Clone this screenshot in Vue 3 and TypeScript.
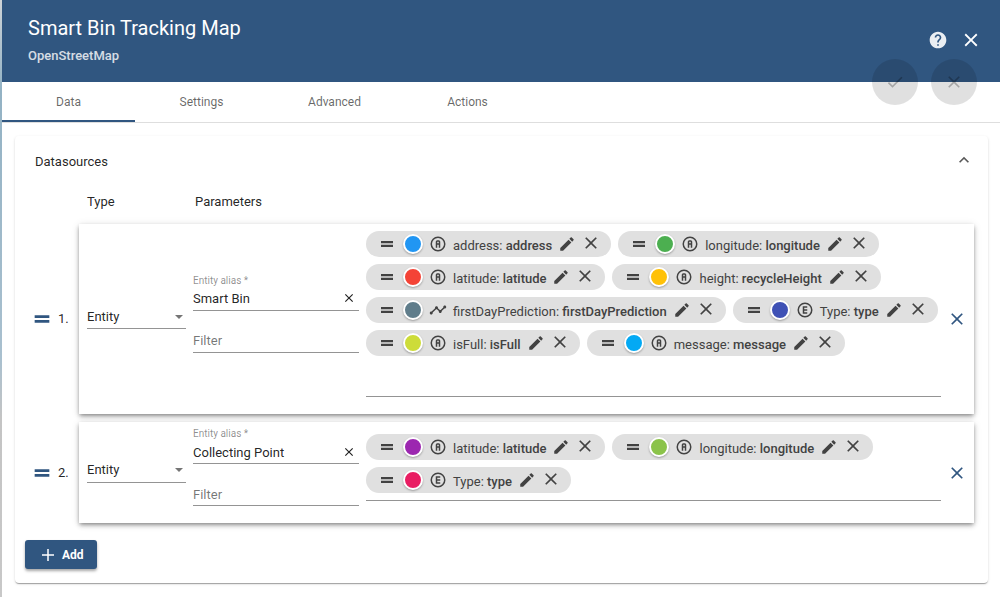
<script setup lang="ts">
import { ref } from 'vue'

type KeyKind = 'attribute' | 'entity' | 'timeseries'

interface DataKey {
  name: string
  label: string
  kind: KeyKind
  color: string
}

interface Datasource {
  type: string
  alias: string
  filter: string
  keys: DataKey[]
}

const tabs = ['Data', 'Settings', 'Advanced', 'Actions']
const activeTab = ref('Data')

const datasources = ref<Datasource[]>([
  {
    type: 'Entity',
    alias: 'Smart Bin',
    filter: '',
    keys: [
      { name: 'address', label: 'address', kind: 'attribute', color: '#2196f3' },
      { name: 'longitude', label: 'longitude', kind: 'attribute', color: '#4caf50' },
      { name: 'latitude', label: 'latitude', kind: 'attribute', color: '#f44336' },
      { name: 'height', label: 'recycleHeight', kind: 'attribute', color: '#ffc107' },
      { name: 'firstDayPrediction', label: 'firstDayPrediction', kind: 'timeseries', color: '#607d8b' },
      { name: 'Type', label: 'type', kind: 'entity', color: '#3f51b5' },
      { name: 'isFull', label: 'isFull', kind: 'attribute', color: '#cddc39' },
      { name: 'message', label: 'message', kind: 'attribute', color: '#03a9f4' },
    ],
  },
  {
    type: 'Entity',
    alias: 'Collecting Point',
    filter: '',
    keys: [
      { name: 'latitude', label: 'latitude', kind: 'attribute', color: '#9c27b0' },
      { name: 'longitude', label: 'longitude', kind: 'attribute', color: '#8bc34a' },
      { name: 'Type', label: 'type', kind: 'entity', color: '#e91e63' },
    ],
  },
])

const ring =
  'M12 20A8 8 0 0 0 20 12A8 8 0 0 0 12 4A8 8 0 0 0 4 12A8 8 0 0 0 12 20M12 2A10 10 0 0 1 22 12A10 10 0 0 1 12 22A10 10 0 0 1 2 12A10 10 0 0 1 12 2Z'

const kindIcon: Record<KeyKind, string> = {
  attribute: 'M11 7H13A2 2 0 0 1 15 9V17H13V13H11V17H9V9A2 2 0 0 1 11 7M11 9V11H13V9H11' + ring,
  entity: 'M9 7H15V9H11V11H15V13H11V15H15V17H9V7' + ring,
  timeseries:
    'M23 8c0 1.1-.9 2-2 2-.18 0-.35-.02-.51-.07l-3.56 3.55c.05.16.07.34.07.52 0 1.1-.9 2-2 2s-2-.9-2-2c0-.18.02-.36.07-.52l-2.55-2.55c-.16.05-.34.07-.52.07s-.36-.02-.52-.07l-4.55 4.56c.05.16.07.33.07.51 0 1.1-.9 2-2 2s-2-.9-2-2 .9-2 2-2c.18 0 .35.02.51.07l4.56-4.55C8.02 9.36 8 9.18 8 9c0-1.1.9-2 2-2s2 .9 2 2c0 .18-.02.36-.07.52l2.55 2.55c.16-.05.34-.07.52-.07s.36.02.52.07l3.55-3.56C19.02 8.35 19 8.18 19 8c0-1.1.9-2 2-2s2 .9 2 2z',
}

const closeIcon =
  'M19 6.41L17.59 5 12 10.59 6.41 5 5 6.41 10.59 12 5 17.59 6.41 19 12 13.41 17.59 19 19 17.59 13.41 12z'
const dragIcon = 'M20 8H4v3h16V8zM4 16h16v-3H4v3z'
const editIcon =
  'M3 17.25V21h3.75L17.81 9.94l-3.75-3.75L3 17.25zM20.71 7.04c.39-.39.39-1.02 0-1.41l-2.34-2.34c-.39-.39-1.02-.39-1.41 0l-1.83 1.83 3.75 3.75 1.83-1.83z'
const helpIcon =
  'M12 2C6.48 2 2 6.48 2 12s4.48 10 10 10 10-4.48 10-10S17.52 2 12 2zm1 17h-2v-2h2v2zm2.07-7.75l-.9.92C13.45 12.9 13 13.5 13 15h-2v-.5c0-1.1.45-2.1 1.17-2.83l1.24-1.26c.37-.36.59-.86.59-1.41 0-1.1-.9-2-2-2s-2 .9-2 2H8c0-2.21 1.79-4 4-4s4 1.79 4 4c0 .88-.36 1.68-.93 2.25z'

function removeKey(source: Datasource, index: number) {
  source.keys.splice(index, 1)
}

function removeSource(index: number) {
  datasources.value.splice(index, 1)
}

function addSource() {
  datasources.value.push({ type: 'Entity', alias: '', filter: '', keys: [] })
}
</script>

<template>
  <div class="page">
    <header class="toolbar">
      <div class="titles">
        <h1>Smart Bin Tracking Map</h1>
        <p>OpenStreetMap</p>
      </div>
      <div class="tools">
        <button type="button" class="icon-btn help" aria-label="Help">
          <svg width="20" height="20" viewBox="0 0 24 24"><path :d="helpIcon" /></svg>
        </button>
        <button type="button" class="icon-btn" aria-label="Close">
          <svg width="22" height="22" viewBox="0 0 24 24"><path :d="closeIcon" /></svg>
        </button>
      </div>
      <div class="fabs">
        <button type="button" class="fab" disabled aria-label="Apply changes">
          <svg width="20" height="20" viewBox="0 0 24 24">
            <path d="M9 16.17L4.83 12l-1.42 1.41L9 19 21 7l-1.41-1.41z" />
          </svg>
        </button>
        <button type="button" class="fab" disabled aria-label="Decline changes">
          <svg width="20" height="20" viewBox="0 0 24 24"><path :d="closeIcon" /></svg>
        </button>
      </div>
    </header>

    <nav class="tabs" role="tablist">
      <button
        v-for="tab in tabs"
        :key="tab"
        type="button"
        role="tab"
        class="tab"
        :class="{ active: tab === activeTab }"
        :aria-selected="tab === activeTab"
        @click="activeTab = tab"
      >
        {{ tab }}
      </button>
    </nav>

    <section class="panel">
      <div class="panel-head">
        <h2>Datasources</h2>
        <button type="button" class="icon-btn chevron" aria-label="Collapse datasources">
          <svg width="20" height="20" viewBox="0 0 24 24">
            <path d="M12 8l-6 6 1.41 1.41L12 10.83l4.59 4.58L18 14z" />
          </svg>
        </button>
      </div>

      <div class="columns">
        <span class="col-type">Type</span>
        <span>Parameters</span>
      </div>

      <ol class="sources">
        <li v-for="(source, index) in datasources" :key="index" class="source">
          <button type="button" class="icon-btn mover" aria-label="Reorder datasource">
            <svg width="22" height="22" viewBox="0 0 24 24"><path :d="dragIcon" /></svg>
          </button>
          <span class="number">{{ index + 1 }}.</span>
          <div class="card">
            <div class="type">
              <select v-model="source.type" aria-label="Type">
                <option>Entity</option>
                <option>Function</option>
              </select>
              <svg class="caret" width="8" height="4" viewBox="0 0 8 4"><path d="M0 0h8L4 4z" /></svg>
            </div>

            <div class="params">
              <label class="caption" :for="`alias-${index}`">Entity alias *</label>
              <div class="line">
                <input :id="`alias-${index}`" v-model="source.alias" type="text" />
                <button type="button" class="icon-btn clear" aria-label="Clear" @click="source.alias = ''">
                  <svg width="14" height="14" viewBox="0 0 24 24"><path :d="closeIcon" /></svg>
                </button>
              </div>
              <div class="line filter">
                <input v-model="source.filter" type="text" placeholder="Filter" aria-label="Filter" />
              </div>
            </div>

            <ul class="keys">
              <li v-for="(key, k) in source.keys" :key="key.name" class="chip">
                <svg width="18" height="18" viewBox="0 0 24 24"><path :d="dragIcon" /></svg>
                <button
                  type="button"
                  class="swatch"
                  :style="{ backgroundColor: key.color }"
                  :aria-label="`Color of ${key.label}`"
                ></button>
                <svg class="kind" width="18" height="18" viewBox="0 0 24 24">
                  <path :d="kindIcon[key.kind]" fill-rule="evenodd" />
                </svg>
                <span class="key-text">{{ key.name }}: <strong>{{ key.label }}</strong></span>
                <button type="button" class="icon-btn edit" :aria-label="`Edit ${key.label}`">
                  <svg width="18" height="18" viewBox="0 0 24 24"><path :d="editIcon" /></svg>
                </button>
                <button
                  type="button"
                  class="icon-btn remove"
                  :aria-label="`Remove ${key.label}`"
                  @click="removeKey(source, k)"
                >
                  <svg width="20" height="20" viewBox="0 0 24 24"><path :d="closeIcon" /></svg>
                </button>
              </li>
              <li class="entry"><input type="text" aria-label="Add data key" /></li>
            </ul>

            <button
              type="button"
              class="icon-btn drop"
              aria-label="Remove datasource"
              @click="removeSource(index)"
            >
              <svg width="20" height="20" viewBox="0 0 24 24"><path :d="closeIcon" /></svg>
            </button>
          </div>
        </li>
      </ol>

      <button type="button" class="add" @click="addSource">
        <svg width="18" height="18" viewBox="0 0 24 24"><path d="M20 13h-7v7h-2v-7H4v-2h7V4h2v7h7v2z" /></svg>
        Add
      </button>
    </section>
  </div>
</template>

<style>
body {
  margin: 0;
  background: #fff;
}
</style>

<style scoped>
.page {
  box-sizing: border-box;
  min-height: 100vh;
  border-left: 2px solid;
  border-image: linear-gradient(#cfd4d8, #93b2c4 15%, #a9c0cf 60%, #c4c4c4 70%, #c8c8c8) 1;
  background: #fff;
  font-family: Roboto, "Liberation Sans", sans-serif;
  font-size: 13px;
  line-height: 16px;
  color: rgba(0, 0, 0, 0.87);
}

h1,
h2,
p,
ol,
ul {
  margin: 0;
  padding: 0;
  list-style: none;
  font-weight: 400;
}

svg {
  display: block;
  flex: none;
  fill: currentColor;
}

button,
input,
select {
  margin: 0;
  padding: 0;
  border: 0;
  outline: 0;
  background: none;
  font: inherit;
  color: inherit;
}

.icon-btn {
  display: flex;
  flex: none;
  cursor: pointer;
}

.toolbar {
  position: relative;
  display: flex;
  justify-content: space-between;
  box-sizing: border-box;
  height: 82px;
  padding: 16px 18px 0 26px;
  background: #305680;
  color: #fff;
}

.toolbar h1 {
  font-size: 20px;
  line-height: 24px;
}

.toolbar p {
  margin-top: 8px;
  font-size: 13px;
  font-weight: 500;
  opacity: 0.8;
}

.tools {
  display: flex;
  align-items: center;
  gap: 12px;
  height: 48px;
}

.help {
  opacity: 0.9;
}

.fabs {
  position: absolute;
  right: 23px;
  bottom: -23px;
  display: flex;
  gap: 13px;
}

.fab {
  display: flex;
  align-items: center;
  justify-content: center;
  width: 46px;
  height: 46px;
  border-radius: 50%;
  background: rgba(0, 0, 0, 0.12);
  color: rgba(0, 0, 0, 0.26);
}

.tabs {
  display: flex;
  height: 40px;
  border-bottom: 1px solid #dedede;
}

.tab {
  box-sizing: border-box;
  width: 133px;
  padding-top: 2px;
  border-bottom: 2px solid transparent;
  font-size: 12px;
  color: rgba(0, 0, 0, 0.6);
  cursor: pointer;
}

.tab.active {
  border-bottom-color: #305680;
}

.panel {
  margin: 13px 12px 14px 13px;
  padding-bottom: 14px;
  border-radius: 4px;
  box-shadow:
    0 2px 1px -1px rgba(0, 0, 0, 0.2),
    0 1px 1px rgba(0, 0, 0, 0.14),
    0 1px 3px rgba(0, 0, 0, 0.12);
}

.panel-head {
  display: flex;
  align-items: center;
  justify-content: space-between;
  height: 52px;
  padding: 0 14px 0 20px;
}

.panel-head h2 {
  font-size: 13px;
  line-height: 16px;
}

.chevron {
  margin-bottom: 4px;
  color: rgba(0, 0, 0, 0.65);
}

.columns {
  display: flex;
  height: 36px;
  padding-left: 72px;
  line-height: 27px;
}

.col-type {
  width: 108px;
}

.sources {
  display: flex;
  flex-direction: column;
  gap: 8px;
  padding: 0 14px 0 16px;
}

.source {
  display: flex;
  align-items: center;
}

.mover,
.drop {
  color: #305680;
}

.number {
  width: 21px;
  margin-left: 5px;
}

.card {
  display: flex;
  flex: 1;
  align-items: center;
  min-width: 0;
  padding: 7px 7px 7px 8px;
  background: #fff;
  box-shadow:
    0 2px 4px -1px rgba(0, 0, 0, 0.4),
    0 3px 5px rgba(0, 0, 0, 0.12),
    0 1px 8px rgba(0, 0, 0, 0.12);
}

.type {
  display: flex;
  flex: none;
  align-items: center;
  box-sizing: border-box;
  width: 99px;
  height: 24px;
  margin: 0 7px 4px 0;
  border-bottom: 1px solid #949494;
}

.type select {
  flex: 1;
  min-width: 0;
  height: 23px;
  margin-right: -11px;
  appearance: none;
}

.caret {
  margin-right: 3px;
  color: rgba(0, 0, 0, 0.54);
  pointer-events: none;
}

.params {
  flex: none;
  width: 166px;
  margin: 0 7px 10px 0;
}

.caption {
  display: block;
  font-size: 10px;
  line-height: 10px;
  padding-bottom: 1px;
  color: rgba(0, 0, 0, 0.45);
}

.line {
  display: flex;
  align-items: center;
  height: 23px;
  border-bottom: 1px solid #949494;
}

.line input {
  flex: 1;
  min-width: 0;
  padding-top: 2px;
}

.line.filter {
  margin-top: 18px;
}

.line input::placeholder {
  color: rgba(0, 0, 0, 0.54);
  opacity: 1;
}

.clear {
  margin-right: 3px;
}

.keys {
  display: flex;
  flex: 1;
  flex-wrap: wrap;
  column-gap: 7px;
  min-width: 0;
  margin-bottom: 10px;
  border-bottom: 1px solid #949494;
}

.chip {
  display: flex;
  align-items: center;
  height: 26px;
  margin-bottom: 7px;
  padding: 0 13px 0 12px;
  border-radius: 13px;
  background: #e0e0e0;
  color: #424242;
}

.swatch {
  flex: none;
  box-sizing: border-box;
  width: 20px;
  height: 20px;
  margin: 0 6px 0 7px;
  border: 2px solid #fff;
  border-radius: 50%;
  box-shadow: 0 1px 2px rgba(0, 0, 0, 0.3);
}

.kind {
  margin-right: 6px;
}

.key-text {
  padding-top: 3px;
  white-space: nowrap;
}

.key-text strong {
  font-weight: 500;
}

.edit {
  margin: 0 5px 0 6px;
}

.remove {
  margin: 0 -3px 2px 0;
}

.entry {
  flex: 1 1 120px;
  height: 33px;
}

.entry input {
  width: 100%;
  height: 26px;
}

.drop {
  margin-left: 6px;
}

.add {
  display: flex;
  align-items: center;
  gap: 5px;
  height: 29px;
  margin: 17px 0 0 10px;
  padding: 0 13px 0 14px;
  border-radius: 3px;
  background: #305680;
  box-shadow: 0 2px 3px rgba(0, 0, 0, 0.35);
  font-size: 12px;
  font-weight: 700;
  color: #fff;
  cursor: pointer;
}
</style>
